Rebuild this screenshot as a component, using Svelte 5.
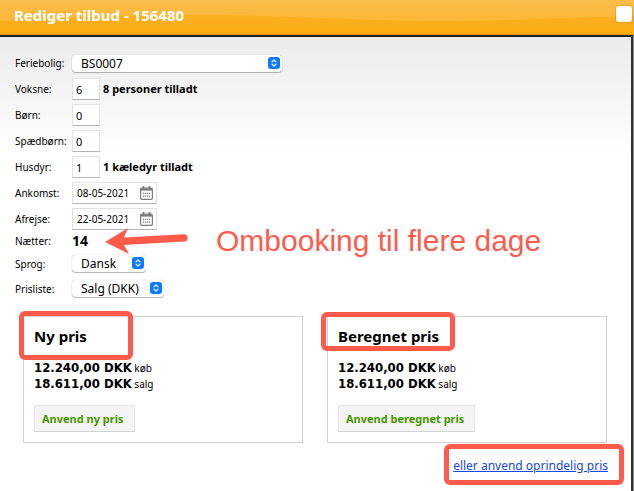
<script>
  const guests = [
    { id: 'adults', label: 'Voksne:', value: '6', note: '8 personer tilladt' },
    { id: 'children', label: 'Børn:', value: '0', note: '' },
    { id: 'infants', label: 'Spædbørn:', value: '0', note: '' },
    { id: 'pets', label: 'Husdyr:', value: '1', note: '1 kæledyr tilladt' }
  ];
  const dates = [
    { id: 'arrival', label: 'Ankomst:', value: '08-05-2021' },
    { id: 'departure', label: 'Afrejse:', value: '22-05-2021' }
  ];
  const prices = [
    { title: 'Ny pris', action: 'Anvend ny pris', mark: 'new' },
    { title: 'Beregnet pris', action: 'Anvend beregnet pris', mark: 'calc' }
  ];
</script>

{#snippet picker(id, option, size)}
  <span class="picker {size}">
    <select {id}><option>{option}</option></select>
    <svg viewBox="0 0 12 12" aria-hidden="true">
      <rect width="12" height="12" rx="3" fill="#0a7aff" />
      <path d="M4 4.8 6 2.8 8 4.8M4 7.2 6 9.2 8 7.2" fill="none" stroke="#fff" stroke-width="1.2" stroke-linecap="round" stroke-linejoin="round" />
    </svg>
  </span>
{/snippet}

<div class="dialog">
  <header>
    <svg class="gloss" viewBox="0 0 634 34" preserveAspectRatio="none" aria-hidden="true">
      <path d="M0 0H634V16C570 17 510 21 450 21C360 21 290 15 200 15C120 15 60 18 0 21Z" fill="#fff" opacity=".12" />
    </svg>
    <h1>Rediger tilbud - 156480</h1>
    <button class="close" aria-label="Luk"></button>
  </header>

  <main>
    <form>
      <div class="row">
        <label for="home">Feriebolig:</label>
        {@render picker('home', 'BS0007', 'wide')}
      </div>
      {#each guests as g}
        <div class="row">
          <label for={g.id}>{g.label}</label>
          <input class="count" id={g.id} value={g.value} />
          <b>{g.note}</b>
        </div>
      {/each}
      {#each dates as d, i}
        <div class="row" class:tight={i === 1}>
          <label for={d.id}>{d.label}</label>
          <span class="date">
            <input id={d.id} value={d.value} />
            <svg viewBox="0 0 13 14" aria-hidden="true">
              <rect x=".6" y="2" width="11.8" height="11.4" rx="1.4" fill="#fff" stroke="#7c7c7c" stroke-width="1.2" />
              <path d="M.7 2.2H12.3V4.6H.7Z" fill="#7c7c7c" />
              <path d="M3.5 0V3M9.5 0V3" stroke="#7c7c7c" stroke-width="1.8" />
              <path d="M2.9 7.4H10.4M2.9 10.2H10.4" stroke="#7c7c7c" stroke-width="1.2" stroke-dasharray="1.2 .8" />
            </svg>
          </span>
        </div>
      {/each}
      <div class="row nights">
        <span class="label">Nætter:</span>
        <strong>14</strong>
        <div class="callout">
          <svg viewBox="0 0 84 28" aria-hidden="true">
            <path d="M0 15 23 1 19 10.5 79 7.3A3.6 3.6 0 0 1 79 14.5L19 18 24 27Z" fill="#fe5b4d" />
          </svg>
          <span>Ombooking til flere dage</span>
        </div>
      </div>
      <div class="row tight">
        <label for="lang">Sprog:</label>
        {@render picker('lang', 'Dansk', 'small')}
      </div>
      <div class="row tight">
        <label for="list">Prisliste:</label>
        {@render picker('list', 'Salg (DKK)', 'medium')}
      </div>
    </form>

    <div class="cards">
      {#each prices as p}
        <section>
          <h2>{p.title}</h2>
          <p><b>12.240,00 DKK</b> køb</p>
          <p><b>18.611,00 DKK</b> salg</p>
          <button class="apply">{p.action}</button>
          <i class="mark {p.mark}"></i>
        </section>
      {/each}
    </div>
    <div class="original">
      <a href="#original">eller anvend oprindelig pris</a>
      <i class="mark link"></i>
    </div>
  </main>
</div>

<style>
  .dialog {
    display: flex;
    flex-direction: column;
    min-height: 100vh;
    background: #8a8d90;
    font: 11px/16px "Noto Sans", "Open Sans", sans-serif;
    color: #000;
  }
  header {
    position: relative;
    display: flex;
    align-items: center;
    justify-content: space-between;
    box-sizing: border-box;
    height: 35px;
    padding: 0 2px 4px 14px;
    background: linear-gradient(#fab432, #fbab0e);
    border-bottom: 1px solid #ee980e;
  }
  .gloss {
    position: absolute;
    inset: 0;
    width: 100%;
    height: 100%;
  }
  h1 {
    position: relative;
    margin: 0;
    font-size: 15px;
    line-height: 20px;
    color: #fff;
  }
  .close {
    position: relative;
    width: 16px;
    height: 16px;
    margin-top: -2px;
    padding: 0;
    border: 0;
    border-radius: 3px;
    background: #fff;
    box-shadow: 0 0 1px 1px #c8861e66;
  }
  main {
    flex: 1;
    margin-right: 1px;
    padding-top: 13px;
    border-top: 2px solid #222;
    border-right: 2px solid #303335;
    background: linear-gradient(#ebebeb, #fff 120px);
  }
  form {
    padding-left: 15px;
  }
  .row {
    display: flex;
    align-items: center;
    height: 26px;
  }
  .tight {
    height: 25px;
  }
  .nights {
    height: 20px;
  }
  label,
  .label {
    flex: none;
    width: 57px;
    font-size: 10px;
  }
  input,
  select {
    box-sizing: border-box;
    margin: 0;
    font: inherit;
    color: inherit;
    background: #fff;
    outline: 0;
  }
  .count,
  .date {
    box-sizing: border-box;
    height: 22px;
    border: 1px solid #e2e2e2;
    border-bottom-color: #b5b5b5;
    background: #fff;
  }
  .count {
    width: 28px;
    margin-right: 3px;
    padding: 0 3px;
  }
  .date {
    display: flex;
    align-items: center;
    width: 85px;
    padding: 0 3px 0 4px;
  }
  .date input {
    flex: 1;
    width: 0;
    height: 16px;
    padding: 0;
    border: 0;
    font-size: 10px;
  }
  .date svg {
    width: 13px;
    height: 14px;
  }
  .picker {
    position: relative;
    height: 17px;
  }
  .picker select {
    display: block;
    width: 100%;
    height: 17px;
    padding: 0 9px;
    border: 0;
    border-radius: 4px;
    appearance: none;
    font-size: 12px;
    line-height: 17px;
    box-shadow: 0 0 1px #0005, 0 1px 1px #0004;
  }
  .picker svg {
    position: absolute;
    top: 2px;
    right: 2px;
    width: 12px;
    height: 12px;
    pointer-events: none;
  }
  .wide {
    width: 210px;
  }
  .small {
    width: 74px;
  }
  .medium {
    width: 92px;
  }
  strong {
    font-size: 14px;
  }
  .callout {
    display: flex;
    align-items: center;
    gap: 27px;
    margin-left: 17px;
    color: #fe5b4d;
    font: 30px/34px "Liberation Sans", Arial, sans-serif;
    white-space: nowrap;
  }
  .callout svg {
    width: 84px;
    height: 28px;
  }
  .cards {
    display: grid;
    grid-template-columns: 1fr 1fr;
    gap: 24px;
    padding: 15px 24px 0 23px;
  }
  section {
    position: relative;
    padding: 9px 10px 10px;
    border: 1px solid #d2d2d2;
  }
  h2 {
    margin: 0 0 14px;
    font-size: 15px;
    line-height: 20px;
  }
  p {
    height: 16px;
    margin: 0;
    font-size: 10px;
    line-height: 16px;
  }
  p b {
    font-family: "DejaVu Sans Condensed", "DejaVu Sans", sans-serif;
    font-size: 13px;
  }
  .apply {
    display: block;
    height: 27px;
    margin-top: 13px;
    padding: 0 10px 0 7px;
    border: 1px solid #e6e6e6;
    border-bottom-color: #d2d2d2;
    background: #f4f4f4;
    font: bold 11px/16px "Noto Sans", "Open Sans", sans-serif;
    color: #489500;
  }
  .original {
    position: relative;
    padding: 15px 23px 0;
    text-align: right;
  }
  a {
    font-size: 12px;
    color: #1449e6;
  }
  .mark {
    position: absolute;
    box-sizing: border-box;
    border: 5px solid #fe5b4d;
    border-radius: 6px;
    pointer-events: none;
  }
  .new {
    top: -6px;
    left: -5px;
    width: 114px;
    height: 49px;
  }
  .calc {
    top: -5px;
    left: -7px;
    width: 134px;
    height: 39px;
  }
  .link {
    top: 1px;
    right: 7px;
    width: 180px;
    height: 41px;
  }
</style>
